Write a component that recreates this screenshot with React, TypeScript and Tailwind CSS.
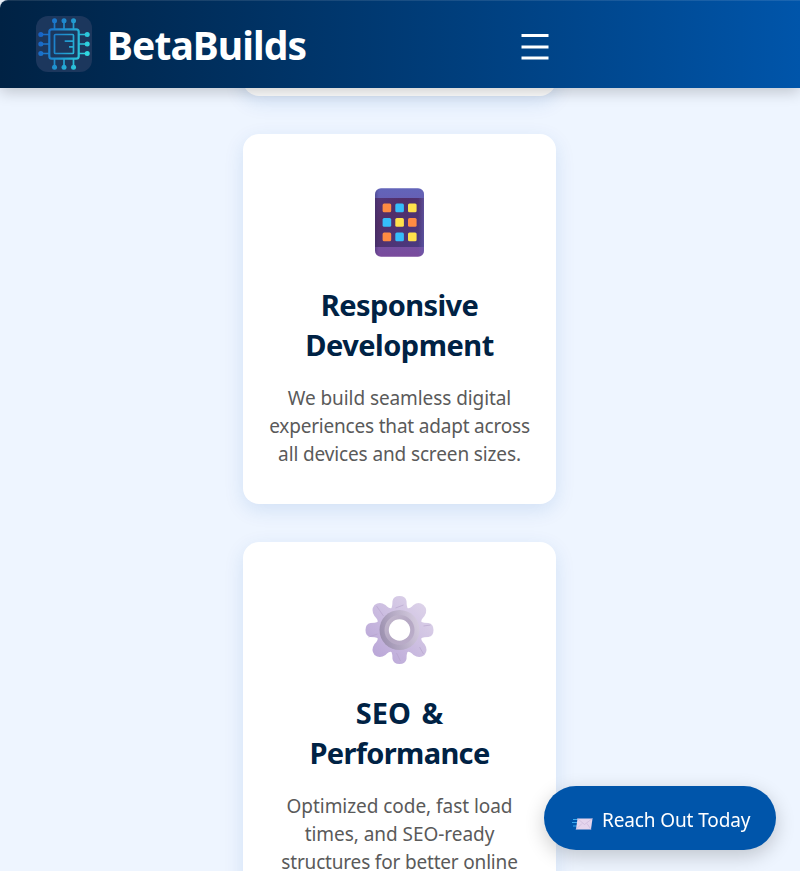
import type { ReactNode } from "react";

function ChipLogo() {
  return (
    <svg viewBox="0 0 56 56" className="-mt-[2px] h-14 w-14 rounded-xl bg-[#1c375d]" fill="none">
      <defs>
        <linearGradient id="chip" gradientUnits="userSpaceOnUse" x1="3" y1="20" x2="53" y2="36">
          <stop stopColor="#1763c9" />
          <stop offset=".5" stopColor="#2095cf" />
          <stop offset="1" stopColor="#31dbe0" />
        </linearGradient>
      </defs>
      <g stroke="url(#chip)" strokeWidth="1.7">
        <rect x="13.300" y="13.300" width="29.400" height="29.400" rx="2.500" strokeWidth="2.200" />
        <rect x="18.500" y="18.500" width="19" height="19" rx="1" />
        <path d="M28.700 25.200h8.500M33 30.800h4.500" />
        <path d="M18.500 5v8M28 5v8M37.500 5v8M18.500 43v8M28 43v8M37.500 43v8M5 18.500h8M5 28h8M5 37.500h8M43 18.500h8M43 28h8M43 37.500h8" />
      </g>
      <g fill="url(#chip)">
        {[18.5, 28, 37.5].map((p) => (
          <g key={p}>
            <circle cx={p} cy="4.800" r="2.500" />
            <circle cx={p} cy="51.200" r="2.500" />
            <circle cx="4.800" cy={p} r="2.500" />
            <circle cx="51.200" cy={p} r="2.500" />
          </g>
        ))}
      </g>
    </svg>
  );
}

function PhoneIcon() {
  const colors = ["#ff8b42", "#35bdfa", "#ffe14b", "#35bdfa", "#ffe14b", "#ff8b42", "#ff8b42", "#35bdfa", "#ffe14b"];
  return (
    <svg viewBox="0 0 49 69" className="h-[69px] w-[49px]">
      <defs>
        <linearGradient id="body" x2="0" y2="1">
          <stop stopColor="#6264b9" />
          <stop offset="1" stopColor="#794b9c" />
        </linearGradient>
        <linearGradient id="screen" x1="0" y1="0" x2="1" y2="1">
          <stop stopColor="#533677" />
          <stop offset=".3" stopColor="#522e68" />
          <stop offset="1" stopColor="#493b83" />
        </linearGradient>
        <linearGradient id="side">
          <stop stopColor="#30285c" stopOpacity=".35" />
          <stop offset=".08" stopColor="#30285c" stopOpacity="0" />
          <stop offset=".88" stopColor="#6661b0" stopOpacity="0" />
          <stop offset="1" stopColor="#6661b0" stopOpacity=".6" />
        </linearGradient>
      </defs>
      <rect x="0" y=".3" width="49" height="68.400" rx="6" fill="url(#body)" />
      <path d="M0 10h49v49H0z" fill="url(#screen)" />
      <rect x="0" y=".3" width="49" height="68.400" rx="6" fill="url(#side)" />
      {colors.map((c, i) => (
        <rect key={i} x={7.6 + (i % 3) * 12.7} y={15.5 + Math.floor(i / 3) * 14.5} width="8.600" height="8.800" rx="1.500" fill={c} />
      ))}
    </svg>
  );
}

function GearIcon() {
  return (
    <svg viewBox="-34.5 -35 69 70" className="h-[70px] w-[69px]">
      <defs>
        <linearGradient id="teeth" gradientUnits="userSpaceOnUse" x1="-24" y1="24" x2="24" y2="-24">
          <stop stopColor="#bba8d8" />
          <stop offset="1" stopColor="#dcd2e9" />
        </linearGradient>
        <linearGradient id="ring" x1="0" y1=".6" x2="1" y2=".3">
          <stop stopColor="#9b8fae" />
          <stop offset="1" stopColor="#d6cde0" />
        </linearGradient>
        <linearGradient id="inner" x1="0" y1="0" x2="1" y2="1">
          <stop stopColor="#c5bacf" />
          <stop offset=".5" stopColor="#b5a8c3" />
          <stop offset="1" stopColor="#bcaecb" />
        </linearGradient>
      </defs>
      <path
        fill="url(#teeth)"
        d="M-8-22Q-7-24-7-29Q-6-34 0-34Q6-34 7-29Q7-24 8-22Q10-21 14-25Q19-29 24-25Q29-20 25-14Q21-10 22-8Q24-7 29-7Q34-6 34 0Q34 6 29 7Q24 7 22 8Q21 10 25 14Q29 20 25 25Q20 29 14 25Q10 21 8 22Q7 24 7 29Q6 34 0 34Q-6 34-7 29Q-7 24-8 22Q-10 21-14 25Q-20 29-25 25Q-29 20-25 14Q-21 10-22 8Q-24 7-29 7Q-34 6-34 0Q-34-6-29-7Q-24-7-22-8Q-21-10-25-14Q-29-20-25-25Q-20-29-14-25Q-10-21-8-22Z"
      />
      <path d="M-4-22l8-3M-23-24l7 10M24-4l7-1M-3 23l4 8M-31 7l9-3M20 17l4 7" stroke="#b3a1ca" strokeWidth=".6" />
      <circle r="20" fill="url(#ring)" />
      <circle r="15" fill="url(#inner)" />
      <circle r="10.700" fill="#fff" />
    </svg>
  );
}

function MailIcon() {
  return (
    <svg viewBox="0 0 21 14" className="mt-2 h-[14px] w-[21px]">
      <path d="M1 2.500h5M0 5.500h5M1 9h4" stroke="#3ba8ee" strokeWidth="1.200" />
      <path d="M5.500 1.500h15l-1.500 11H4z" fill="#e5d5ed" />
      <path d="M5.500 1.500l7 6 8-6M4 12.500l6-6M19 12.500l-4-6" stroke="#c8b3d7" strokeWidth=".6" fill="none" />
    </svg>
  );
}

function Card({ icon, title, lines }: { icon: ReactNode; title: ReactNode; lines: ReactNode }) {
  return (
    <article className="flex h-[370px] w-[313px] shrink-0 flex-col items-center rounded-2xl bg-white pt-[53px] text-center shadow-[0_6px_20px_rgba(0,85,170,0.12)]">
      <div className="flex h-[70px] items-center">{icon}</div>
      <h3 className="mt-[28px] text-[29px] leading-10 font-bold whitespace-nowrap text-[#002244]">{title}</h3>
      <p className="mt-[19px] text-[19px] leading-7 whitespace-nowrap text-[#5a5a5a]">{lines}</p>
    </article>
  );
}

export default function App() {
  return (
    <div className="flex h-[871px] flex-col overflow-hidden bg-[#eef5ff] font-['Noto_Sans',sans-serif]">
      <header className="relative z-10 flex h-[88px] shrink-0 items-center rounded-tl-lg border-t border-[#ffffff1a] bg-linear-to-r from-[#002244] to-[#0055aa] bg-origin-border pl-9 shadow-[0_4px_15px_rgba(0,0,0,0.2)]">
        <ChipLogo />
        <span className="mt-px ml-[15px] w-[414px] text-[39px] leading-[56px] font-bold tracking-[-0.92px] text-white">BetaBuilds</span>
        <svg viewBox="0 0 28 28" className="mt-1 h-7 w-7">
          <path d="M.5 2.500h27M.5 14h27M.5 25h27" stroke="white" strokeWidth="2.800" />
        </svg>
      </header>
      <main className="flex min-h-0 flex-1 flex-col items-center overflow-hidden pr-px">
        <div className="-mt-8 h-10 w-[313px] shrink-0 rounded-b-2xl bg-white shadow-[0_6px_20px_rgba(0,85,170,0.12)]" />
        <div className="mt-[38px] flex flex-col gap-[38px]">
          <Card
            icon={<PhoneIcon />}
            title={<><span className="block tracking-[-0.6px]">Responsive</span><span className="block tracking-[-0.5px]">Development</span></>}
            lines={<><span className="block tracking-[-0.08px]">We build seamless digital</span><span className="block tracking-[-0.2px]">experiences that adapt across</span><span className="block tracking-[-0.13px]">all devices and screen sizes.</span></>}
          />
          <Card
            icon={<GearIcon />}
            title={<><span className="block tracking-[0px] [word-spacing:3px]">SEO &amp;</span><span className="block tracking-[-0.65px]">Performance</span></>}
            lines={<><span className="block tracking-[-0.05px]">Optimized code, fast load</span><span className="block tracking-[-0.05px]">times, and SEO-ready</span><span className="block tracking-[-0.18px]">structures for better online</span></>}
          />
        </div>
      </main>
      <button className="fixed right-6 bottom-[21px] z-20 flex h-16 w-[232px] items-center rounded-full bg-[#0055aa] pt-1 pl-7 text-[19px] whitespace-nowrap text-white shadow-[0_6px_20px_rgba(0,0,0,0.2)]">
        <MailIcon />
        <span className="ml-[9px] tracking-[-0.12px]">Reach Out Today</span>
      </button>
    </div>
  );
}
